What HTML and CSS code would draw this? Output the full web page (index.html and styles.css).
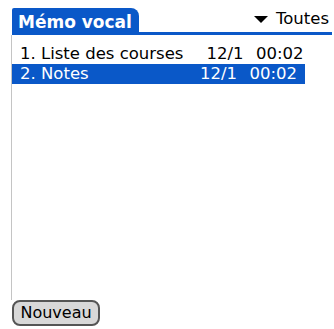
FILE: index.html
```html
<!DOCTYPE html>
<html lang="fr">
<head>
<meta charset="utf-8">
<title>Mémo vocal</title>
<link rel="stylesheet" href="styles.css">
</head>
<body>
<div class="screen">
  <div class="titlebar">
    <div class="tab">Mémo vocal</div>
    <div class="category">
      <svg class="tri" width="14" height="7" viewBox="0 0 14 7"><polygon points="0,0 14,0 7,7" fill="#000"/></svg>
      <span>Toutes</span>
    </div>
  </div>
  <div class="content">
    <div class="list">
      <div class="row">
        <span class="name">1. Liste des courses</span>
        <span class="date">12/1</span>
        <span class="time">00:02</span>
      </div>
      <div class="row selected">
        <span class="name">2. Notes</span>
        <span class="date">12/1</span>
        <span class="time">00:02</span>
      </div>
    </div>
  </div>
  <div class="buttons">
    <button class="btn">Nouveau</button>
  </div>
</div>
</body>
</html>
```
FILE: styles.css
```css
html, body {
  margin: 0;
  padding: 0;
  background: #ffffff;
}
.screen {
  width: 334px;
  height: 329px;
  display: flex;
  flex-direction: column;
  font-family: "DejaVu Sans", "Liberation Sans", sans-serif;
  color: #000;
  overflow: hidden;
}
.titlebar {
  display: flex;
  align-items: flex-end;
  padding-top: 8px;
  margin-left: 12px;
  margin-right: 2px;
  border-bottom: 3px solid #0a58c8;
}
.tab {
  background: #0a58c8;
  color: #fff;
  font-weight: bold;
  font-size: 17px;
  line-height: 19px;
  height: 19px;
  padding: 5px 0 0 6px;
  width: 121px;
  border-radius: 2px 8px 0 0;
  white-space: nowrap;
}
.category {
  margin-left: auto;
  align-self: flex-start;
  margin-top: 1px;
  display: flex;
  align-items: center;
  gap: 8px;
  font-size: 16.5px;
  line-height: 20px;
  padding-right: 3px;
}
.tri {
  display: block;
  margin-top: 1px;
}
.content {
  flex: 1;
  margin-left: 11px;
  border-left: 1px solid #c4c4c4;
  padding-top: 9px;
}
.list {
  width: 293px;
}
.row {
  display: grid;
  grid-template-columns: 1fr 60px 60px;
  font-size: 16.5px;
  line-height: 20px;
  height: 20px;
  padding: 0 8px;
  white-space: nowrap;
}
.row.selected {
  background: #0a58c8;
  color: #fff;
}
.date, .time {
  text-align: right;
}
.buttons {
  padding: 0 0 3px 12px;
  display: flex;
}
.btn {
  font-family: "DejaVu Sans", "Liberation Sans", sans-serif;
  font-size: 16px;
  line-height: 20px;
  height: 26px;
  width: 88px;
  padding: 0;
  margin: 0;
  background: #d8d8d8;
  color: #000;
  border: 2px solid #555;
  border-radius: 8px;
  text-align: center;
}
```
